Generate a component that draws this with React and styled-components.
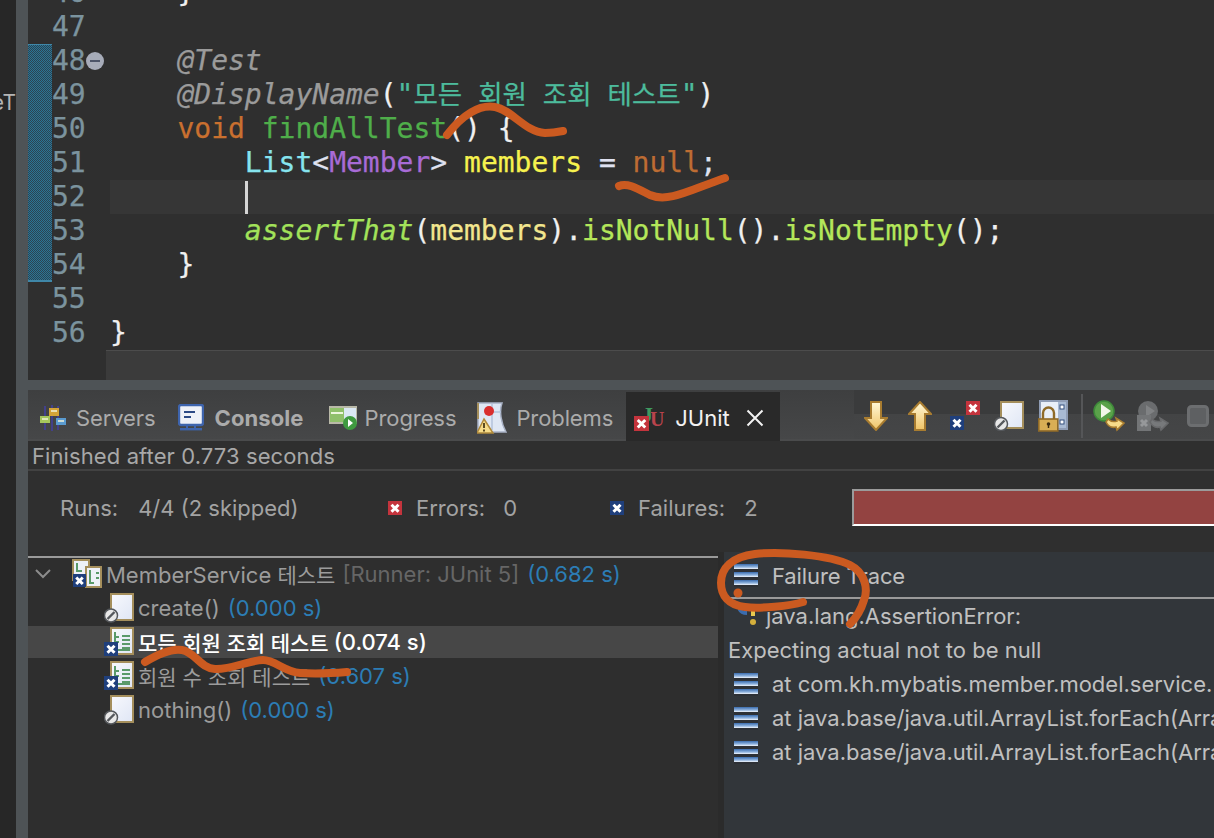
import React from "react";
import styled, { createGlobalStyle } from "styled-components";

const UI_FONT = `"Inter", "Noto Sans CJK KR", sans-serif`;
const MONO_FONT = `"DejaVu Sans Mono", "Noto Sans CJK KR", monospace`;

const GlobalStyle = createGlobalStyle`
  html, body {
    margin: 0;
    padding: 0;
    background: #2f2f2f;
  }
  * {
    box-sizing: border-box;
  }
`;

const tokenColors = {
  annotation: "#9b9b9b",
  keyword: "#c9702f",
  method: "#4fae4a",
  type: "#86e4ee",
  generic: "#a86bd6",
  plain: "#f0f0f0",
  field: "#f6f24e",
  op: "#dfe1f0",
  nullish: "#bd6c33",
  string: "#4dbb9c",
  staticCall: "#a3e25a",
  param: "#f2e68e",
  call: "#b4e65a",
};

// 에디터 코드 라인
const codeLines = [
  { no: 46, tokens: [["plain", "    }"]] },
  { no: 47, tokens: [] },
  { no: 48, changed: true, fold: true, tokens: [["annotation", "    @Test", true]] },
  {
    no: 49,
    changed: true,
    tokens: [
      ["annotation", "    @DisplayName", true],
      ["plain", "("],
      ["string", '"'],
      ["hangul", "모든 회원 조회 테스트"],
      ["string", '"'],
      ["plain", ")"],
    ],
  },
  {
    no: 50,
    changed: true,
    tokens: [
      ["keyword", "    void "],
      ["method", "findAllTest"],
      ["plain", "() {"],
    ],
  },
  {
    no: 51,
    changed: true,
    tokens: [
      ["type", "        List"],
      ["op", "<"],
      ["generic", "Member"],
      ["op", "> "],
      ["field", "members "],
      ["op", "= "],
      ["nullish", "null"],
      ["op", ";"],
    ],
  },
  { no: 52, changed: true, current: true, tokens: [] },
  {
    no: 53,
    changed: true,
    tokens: [
      ["staticCall", "        assertThat", true],
      ["plain", "("],
      ["param", "members"],
      ["plain", ")."],
      ["call", "isNotNull"],
      ["plain", "()."],
      ["call", "isNotEmpty"],
      ["plain", "();"],
    ],
  },
  { no: 54, changed: true, tokens: [["plain", "    }"]] },
  { no: 55, tokens: [] },
  { no: 56, tokens: [["plain", "}"]] },
];

const Page = styled.div`
  width: 1214px;
  height: 838px;
  display: flex;
  overflow: hidden;
  position: relative;
  background: #2f2f2f;
  font-family: ${UI_FONT};
`;

const LeftEdge = styled.div`
  width: 16px;
  flex-shrink: 0;
  background: #272727;
  padding-top: 90px;
  overflow: hidden;
  color: #b5b5b5;
  font-size: 21px;
  line-height: 26px;
  white-space: nowrap;
  display: flex;
  justify-content: flex-end;
`;

const VerticalSash = styled.div`
  width: 12px;
  flex-shrink: 0;
  background: #4e5356;
`;

const Main = styled.div`
  flex: 1;
  min-width: 0;
  display: flex;
  flex-direction: column;
`;

const Editor = styled.div`
  height: 380px;
  flex-shrink: 0;
  display: flex;
  flex-direction: column;
  overflow: hidden;
  background: #2f2f2f;
`;

const CodeLines = styled.div`
  margin-top: -24px;
  font-family: ${MONO_FONT};
  font-size: 28px;
  -webkit-text-stroke: 0.25px;
`;

const CodeRow = styled.div`
  height: 34px;
  display: flex;
  line-height: 34px;
`;

const ChangeCell = styled.div`
  width: 24px;
  flex-shrink: 0;
  ${(p) =>
    p.$changed &&
    `background: repeating-conic-gradient(#2b7596 0 25%, #2b4452 0 50%) 0 0 / 2px 2px;`}
  ${(p) => p.$first && `box-shadow: inset 0 1px #3f87a8;`}
  ${(p) => p.$last && `box-shadow: inset 0 -2px #3f87a8;`}
`;

const LineNo = styled.div`
  width: 34px;
  flex-shrink: 0;
  color: #7b939e;
`;

const FoldCell = styled.div`
  width: 24px;
  flex-shrink: 0;
  display: flex;
  align-items: center;
`;

const FoldMark = styled.span`
  width: 18px;
  height: 18px;
  border-radius: 50%;
  background: #a7acb9;
  display: flex;
  align-items: center;
  justify-content: center;

  &::after {
    content: "";
    width: 10px;
    height: 2px;
    background: #4c5468;
  }
`;

const CodeText = styled.div`
  flex: 1;
  white-space: pre;
  position: relative;
  background: ${(p) => (p.$current ? "#363636" : "transparent")};
`;

const Caret = styled.span`
  position: absolute;
  left: 135px;
  top: 1px;
  bottom: 0;
  width: 3px;
  background: #d5d5d5;
`;

const Tok = styled.span`
  color: ${(p) => tokenColors[p.$kind]};
  font-style: ${(p) => (p.$italic ? "italic" : "normal")};
`;

const HangulText = styled.span`
  color: ${tokenColors.string};
  font-size: 26.5px;
`;

const HScrollTrack = styled.div`
  margin-left: 78px;
  flex: 1;
  background: #3b3b3b;
  border-top: 1px solid #4c4c4c;
`;

const HorizontalSash = styled.div`
  height: 10px;
  flex-shrink: 0;
  background: #4e5356;
`;

const TabBar = styled.div`
  height: 51px;
  flex-shrink: 0;
  display: flex;
  background: linear-gradient(#3e3f40, #464748);
  border-bottom: 2px solid #4a4b4c;
`;

const Tab = styled.div`
  display: flex;
  align-items: center;
  padding-top: 6px;
  gap: ${(p) => p.$gap || 11}px;
  margin-left: ${(p) => p.$offset || 0}px;
  font-size: 22px;
  letter-spacing: -0.1px;
  color: #ababab;
`;

const TabStrong = styled.b`
  font-weight: 700;
  letter-spacing: 0.1px;
`;

const ActiveTab = styled.div`
  width: 154px;
  height: 49px;
  margin: 2px 0 0 13px;
  padding: 3px 16px 0 8px;
  display: flex;
  align-items: center;
  background: #292929;
  color: #f2f2f2;
  font-size: 22px;
`;

const ActiveTabLabel = styled.span`
  margin-left: 9px;
  flex: 1;
`;

const ToolBar = styled.div`
  margin-left: auto;
  width: 360px;
  height: 49px;
  display: flex;
  align-items: center;
  padding: 3px 0 0 10px;
  background: linear-gradient(#3a3b3c, #3a3b3c 50%, #434445 50%, #454647);
`;

const ToolSlot = styled.div`
  width: ${(p) => p.$w}px;
  display: flex;
  flex-shrink: 0;
`;

const ToolSep = styled.div`
  width: 2px;
  height: 44px;
  margin: 0 10px 0 12px;
  background: #555658;
`;

const StatusRow = styled.div`
  height: 30px;
  flex-shrink: 0;
  padding: 0 0 0 4px;
  color: #a8a8a8;
  font-size: 22px;
  letter-spacing: 0.1px;
  line-height: 31px;
  border-bottom: 2px solid #424242;
`;

const CounterRow = styled.div`
  height: 81px;
  flex-shrink: 0;
  display: flex;
  align-items: center;
  padding: 0 0 8px 32px;
  color: #a3a3a3;
  font-size: 22px;
`;

const Counter = styled.div`
  width: ${(p) => p.$w}px;
  display: flex;
  align-items: center;
  flex-shrink: 0;
`;

const CounterLabel = styled.span`
  margin-left: ${(p) => p.$ml || 0}px;
`;

const CounterValue = styled.span`
  margin-left: ${(p) => p.$ml}px;
`;

const ProgressBar = styled.div`
  flex: 1;
  height: 37px;
  background: #934341;
  border-top: 2px solid #9b9b9b;
  border-left: 2px solid #9b9b9b;
  border-bottom: 2px solid #ffffff;
`;

const Panels = styled.div`
  flex: 1;
  min-height: 0;
  display: flex;
`;

const TreePanel = styled.div`
  width: 690px;
  flex-shrink: 0;
  padding-top: 4px;
  background: #2e2e2e;
`;

const TreeTopLine = styled.div`
  height: 2px;
  background: #9a9a9a;
`;

const TreeRow = styled.div`
  height: 32px;
  margin-bottom: 2px;
  display: flex;
  align-items: center;
  white-space: nowrap;
  padding-left: ${(p) => p.$indent}px;
  font-size: 22px;
  color: #9c9c9c;
  ${(p) => p.$selected && `background: #474747; color: #ffffff; font-weight: 500;`}
`;

const TreeLabel = styled.span`
  margin-left: 4px;
`;

const Korean = styled.span`
  font-size: 21px;
`;

const Chevron = styled.span`
  width: 37px;
  flex-shrink: 0;
  display: flex;
`;

const RunnerNote = styled.span`
  color: #666666;
  margin-left: 7px;
`;

const Elapsed = styled.span`
  color: ${(p) => (p.$selected ? "#ffffff" : "#2c7db5")};
  margin-left: ${(p) => (p.$selected ? 5 : 8)}px;
`;

const Divider = styled.div`
  width: 6px;
  flex-shrink: 0;
  background: #2b2b2b;
`;

const TracePanel = styled.div`
  flex: 1;
  min-width: 0;
  background: #32363a;
  overflow: hidden;
  color: #c0c0c0;
  font-size: 22px;
`;

const TraceHeader = styled.div`
  height: 47px;
  padding: 2px 0 0 10px;
  display: flex;
  align-items: center;
  gap: 14px;
  letter-spacing: -0.1px;
  border-bottom: 2px solid #9a9a9a;
`;

const TraceRow = styled.div`
  height: 34px;
  display: flex;
  align-items: center;
  white-space: nowrap;
  padding-left: ${(p) => p.$indent ?? 10}px;
  gap: ${(p) => p.$gap ?? 14}px;
`;

const StackStripes = styled.span`
  width: 24px;
  height: 23px;
  flex-shrink: 0;
  background: repeating-linear-gradient(
    #3a6cae 0,
    #8fb3de 3px,
    #f2f6fc 5px,
    #2d3035 5px,
    #2d3035 8px
  );
`;

const Scribbles = styled.svg`
  position: absolute;
  left: 0;
  top: 0;
  pointer-events: none;
`;

const Cross = ({ x, y, size, color = "#fff" }) => (
  <path
    d={`M${x} ${y}l${size} ${size}M${x + size} ${y}l${-size} ${size}`}
    stroke={color}
    strokeWidth="3"
    fill="none"
  />
);

const ErrorBadge = ({ x = 0, y = 0, size = 14, bg = "#c4343d" }) => (
  <g>
    <rect x={x} y={y} width={size} height={size} fill={bg} />
    <Cross x={x + size * 0.25} y={y + size * 0.27} size={size * 0.5} />
  </g>
);

const SkipBadge = ({ x, y }) => (
  <g>
    <circle cx={x} cy={y} r="6.5" fill="#e8e8e8" stroke="#55585c" strokeWidth="1.5" />
    <path d={`M${x - 3.5} ${y + 3.5}L${x + 3.5} ${y - 3.5}`} stroke="#55585c" strokeWidth="2.4" />
  </g>
);

const TestPage = ({ lines }) => (
  <>
    <defs>
      <linearGradient id="pageFill" x1="0" y1="0" x2="1" y2="1">
        <stop offset="0" stopColor="#f8f9fd" />
        <stop offset="1" stopColor="#dfe6f5" />
      </linearGradient>
    </defs>
    <rect x="7" y="1" width="22" height="26" fill="url(#pageFill)" stroke="#a58f5c" strokeWidth="2" />
    {lines && (
      <path
        d="M11 5v10h4M11 10h4M11 15v8h15M18 9h8M18 13h8M18 17h8M18 21h8"
        stroke="#5a9a6a"
        strokeWidth="2"
        fill="none"
      />
    )}
  </>
);

const SkippedTestIcon = () => (
  <svg width="30" height="30" viewBox="0 0 30 30">
    <TestPage />
    <SkipBadge x={7} y={22.5} />
  </svg>
);

const FailedTestIcon = () => (
  <svg width="30" height="30" viewBox="0 0 30 30">
    <TestPage lines />
    <ErrorBadge x={0} y={15} size={14} bg="#1f3f7c" />
  </svg>
);

const SuiteIcon = () => (
  <svg width="30" height="30" viewBox="0 0 30 30">
    <rect x="1" y="1" width="16" height="20" fill="#eef1f8" stroke="#a58f5c" strokeWidth="2" />
    <path d="M5 4v8h5" stroke="#5a9a6a" strokeWidth="2" fill="none" />
    <rect x="14" y="8" width="15" height="20" fill="#eef1f8" stroke="#a58f5c" strokeWidth="2" />
    <path d="M18 11v13h4M24 14h3M24 19h3" stroke="#5a9a6a" strokeWidth="2" fill="none" />
    <ErrorBadge x={1} y={15} size={13} bg="#1f3f7c" />
  </svg>
);

const ChevronIcon = () => (
  <svg width="16" height="10" viewBox="0 0 16 10">
    <path d="M1 1l7 7 7-7" stroke="#8c8c8c" strokeWidth="2" fill="none" />
  </svg>
);

const ServersIcon = () => (
  <svg width="26" height="26" viewBox="0 0 26 26">
    <path d="M5 1v24M12 0v26M18 1v24" stroke="#42408a" strokeWidth="2" />
    <rect x="9" y="3" width="10" height="8" fill="#d4a437" />
    <rect x="0" y="11" width="10" height="7" fill="#a5c65c" />
    <rect x="16" y="13" width="10" height="7" fill="#5a9bd0" />
    <path d="M2 14h6M11 6h6M18 16h6" stroke="#f2f2d8" strokeWidth="1.4" />
  </svg>
);

const ConsoleIcon = () => (
  <svg width="26" height="27" viewBox="0 0 26 27">
    <rect x="1" y="1" width="24" height="20" rx="2" fill="#eef1f8" stroke="#3e64ad" strokeWidth="2.4" />
    <path d="M6 8h11M6 13h7" stroke="#2c4a86" strokeWidth="2.2" />
    <path d="M9 22v2M17 22v2" stroke="#3e64ad" strokeWidth="2" />
    <rect x="2" y="24" width="22" height="2.4" fill="#3e64ad" />
  </svg>
);

const ProgressIcon = () => (
  <svg width="28" height="24" viewBox="0 0 28 24">
    <rect x="0" y="0" width="28" height="18" fill="#b9b9a8" />
    <rect x="1" y="2" width="14" height="14" fill="#8fc06a" />
    <rect x="15" y="2" width="12" height="14" fill="#dbe8f4" />
    <path d="M2 7h12" stroke="#ecf6dc" strokeWidth="2" />
    <circle cx="21" cy="17" r="7" fill="#3f9a3f" />
    <path d="M19 13v8l5-4z" fill="#fff" />
  </svg>
);

const ProblemsIcon = () => (
  <svg width="30" height="32" viewBox="0 0 30 32">
    <path d="M1 1h24c-3 8 -1 20 4 29H1z" fill="#dfe7f4" stroke="#a9b2c6" strokeWidth="1.5" />
    <path d="M1 1v16" stroke="#a58f5c" strokeWidth="2" />
    <path d="M8 10h16M15 2v26" stroke="#b4c2da" strokeWidth="1.5" />
    <circle cx="12" cy="9" r="5" fill="#d92e2e" />
    <path d="M7 17l9 14H0z" fill="#f6dc8a" stroke="#b08a3c" strokeWidth="1.5" />
    <path d="M7 21v5M7 27.5v2" stroke="#4a3a18" strokeWidth="1.8" />
  </svg>
);

const JUnitIcon = () => (
  <svg width="32" height="30" viewBox="0 0 32 30">
    <text x="8" y="19" fontFamily="Liberation Serif, serif" fontSize="22" fontWeight="700" fill="#3f9a5f">
      J
    </text>
    <text x="16" y="23" fontFamily="Liberation Serif, serif" fontSize="20" fontWeight="700" fill="#b8434c">
      U
    </text>
    <ErrorBadge x={0} y={13} size={15} />
  </svg>
);

const CloseIcon = () => (
  <svg width="18" height="18" viewBox="0 0 18 18">
    <path d="M1.5 1.5l15 15M16.5 1.5l-15 15" stroke="#f2f2f2" strokeWidth="2" />
  </svg>
);

const ArrowFill = () => (
  <defs>
    <linearGradient id="arrowFill" x1="0" y1="0" x2="0" y2="1">
      <stop offset="0" stopColor="#fff8d8" />
      <stop offset="1" stopColor="#f0c466" />
    </linearGradient>
  </defs>
);

const DownArrowIcon = () => (
  <svg width="24" height="30" viewBox="0 0 24 30">
    <ArrowFill />
    <path d="M7 1h10v16h6L12 29 1 17h6z" fill="url(#arrowFill)" stroke="#a87c30" strokeWidth="2" />
  </svg>
);

const UpArrowIcon = () => (
  <svg width="24" height="30" viewBox="0 0 24 30">
    <ArrowFill />
    <path d="M7 29h10V13h6L12 1 1 13h6z" fill="url(#arrowFill)" stroke="#a87c30" strokeWidth="2" />
  </svg>
);

const ErrorPairIcon = () => (
  <svg width="30" height="31" viewBox="0 0 30 31">
    <ErrorBadge x={16} y={0} size={14} />
    <ErrorBadge x={0} y={15} size={14} bg="#1f3f7c" />
  </svg>
);

const SkipPageIcon = () => (
  <svg width="30" height="30" viewBox="0 0 30 30">
    <TestPage />
    <SkipBadge x={7} y={23} />
  </svg>
);

const LockLayoutIcon = () => (
  <svg width="30" height="32" viewBox="0 0 30 32">
    <rect x="2" y="1" width="27" height="28" fill="#e9eff8" stroke="#8f9cb4" strokeWidth="2" />
    <rect x="20" y="2" width="8" height="26" fill="#a9bad3" />
    <rect x="22" y="5" width="4" height="4" fill="#fff" stroke="#36507e" />
    <rect x="22" y="20" width="4" height="4" fill="#fff" stroke="#36507e" />
    <path d="M5 19v-6a5.5 5.5 0 0 1 11 0v6" fill="none" stroke="#8f6a28" strokeWidth="2.4" />
    <rect x="0.8" y="19" width="19" height="12" fill="#d9ae55" stroke="#8f6a28" strokeWidth="1.6" />
    <circle cx="10.5" cy="24" r="1.8" fill="#3d2c10" />
    <path d="M10.5 24v4" stroke="#3d2c10" strokeWidth="1.5" />
  </svg>
);

const RerunIcon = () => (
  <svg width="32" height="32" viewBox="0 0 32 32">
    <circle cx="11" cy="11" r="10" fill="#5aa24a" stroke="#3e8a3a" strokeWidth="1.5" />
    <path d="M8 4v14l10-7z" fill="#f2f7ea" />
    <path
      d="M15 19c3 3 6 3 9 2l-1-3 8 5-7 7-1-3c-4 1-8-1-10-5z"
      fill="#f8dc8a"
      stroke="#a87c30"
      strokeWidth="1.6"
    />
  </svg>
);

const RerunFailedIcon = () => (
  <svg width="32" height="32" viewBox="0 0 32 32">
    <circle cx="11" cy="11" r="10" fill="#6a6c6e" />
    <path d="M9 5v12l9-6z" fill="#808284" />
    <rect x="0" y="15" width="14" height="16" fill="#737577" />
    <Cross x={4} y={20} size={6} color="#96989a" />
    <path
      d="M15 19c3 3 6 3 9 2l-1-3 8 5-7 7-1-3c-4 1-8-1-10-5z"
      fill="#77797b"
      stroke="#68696b"
      strokeWidth="1.6"
    />
  </svg>
);

const StopIcon = () => (
  <svg width="22" height="22" viewBox="0 0 22 22">
    <rect x="1.5" y="1.5" width="19" height="19" rx="3" fill="#5e6062" stroke="#6c6e70" strokeWidth="3" />
  </svg>
);

const CounterBadge = ({ bg }) => (
  <svg width="14" height="14" viewBox="0 0 14 14">
    <ErrorBadge x={0} y={0} size={14} bg={bg} />
  </svg>
);

const WarningStackIcon = () => (
  <svg width="26" height="26" viewBox="0 0 26 26">
    <path d="M1 2c0 6 2 8 8 8" stroke="#3a6cae" strokeWidth="4" fill="none" />
    <path d="M15 4v9" stroke="#e8c94f" strokeWidth="4" />
    <circle cx="15" cy="19" r="3" fill="#d5b03c" />
  </svg>
);

const renderToken = ([kind, text, italic], idx) =>
  kind === "hangul" ? (
    <HangulText key={idx}>{text}</HangulText>
  ) : (
    <Tok key={idx} $kind={kind} $italic={italic}>
      {text}
    </Tok>
  );

const App = () => {
  return (
    <Page>
      <GlobalStyle />
      <LeftEdge>eT</LeftEdge>
      <VerticalSash />
      <Main>
        <Editor>
          <CodeLines>
            {codeLines.map((line) => (
              <CodeRow key={line.no}>
                <ChangeCell
                  $changed={line.changed}
                  $first={line.no === 48}
                  $last={line.no === 54}
                />
                <LineNo>{line.no}</LineNo>
                <FoldCell>{line.fold && <FoldMark />}</FoldCell>
                <CodeText $current={line.current}>
                  {line.tokens.map(renderToken)}
                  {line.current && <Caret />}
                </CodeText>
              </CodeRow>
            ))}
          </CodeLines>
          <HScrollTrack />
        </Editor>
        <HorizontalSash />

        <TabBar>
          <Tab $offset={12} $gap={10}>
            <ServersIcon />
            Servers
          </Tab>
          <Tab $offset={22}>
            <ConsoleIcon />
            <TabStrong>Console</TabStrong>
          </Tab>
          <Tab $offset={25} $gap={8}>
            <ProgressIcon />
            Progress
          </Tab>
          <Tab $offset={21} $gap={9}>
            <ProblemsIcon />
            Problems
          </Tab>
          <ActiveTab>
            <JUnitIcon />
            <ActiveTabLabel>JUnit</ActiveTabLabel>
            <CloseIcon />
          </ActiveTab>
          <ToolBar>
            <ToolSlot $w={44}>
              <DownArrowIcon />
            </ToolSlot>
            <ToolSlot $w={42}>
              <UpArrowIcon />
            </ToolSlot>
            <ToolSlot $w={44}>
              <ErrorPairIcon />
            </ToolSlot>
            <ToolSlot $w={44}>
              <SkipPageIcon />
            </ToolSlot>
            <ToolSlot $w={31}>
              <LockLayoutIcon />
            </ToolSlot>
            <ToolSep />
            <ToolSlot $w={44}>
              <RerunIcon />
            </ToolSlot>
            <ToolSlot $w={50}>
              <RerunFailedIcon />
            </ToolSlot>
            <ToolSlot $w={22}>
              <StopIcon />
            </ToolSlot>
          </ToolBar>
        </TabBar>

        <StatusRow>Finished after 0.773 seconds</StatusRow>

        <CounterRow>
          <Counter $w={328}>
            <CounterLabel>Runs:</CounterLabel>
            <CounterValue $ml={20}>4/4 (2 skipped)</CounterValue>
          </Counter>
          <Counter $w={222}>
            <CounterBadge bg="#c4343d" />
            <CounterLabel $ml={14}>Errors:</CounterLabel>
            <CounterValue $ml={18}>0</CounterValue>
          </Counter>
          <Counter $w={242}>
            <CounterBadge bg="#1f3f7c" />
            <CounterLabel $ml={14}>Failures:</CounterLabel>
            <CounterValue $ml={19}>2</CounterValue>
          </Counter>
          <ProgressBar />
        </CounterRow>

        <Panels>
          <TreePanel>
            <TreeTopLine />
            <TreeRow $indent={7}>
              <Chevron>
                <ChevronIcon />
              </Chevron>
              <SuiteIcon />
              <TreeLabel>
                MemberService <Korean>테스트</Korean>
              </TreeLabel>
              <RunnerNote>[Runner: JUnit 5]</RunnerNote>
              <Elapsed>(0.682 s)</Elapsed>
            </TreeRow>
            <TreeRow $indent={76}>
              <SkippedTestIcon />
              <TreeLabel>create()</TreeLabel>
              <Elapsed>(0.000 s)</Elapsed>
            </TreeRow>
            <TreeRow $indent={76} $selected>
              <FailedTestIcon />
              <TreeLabel>
                <Korean>모든 회원 조회 테스트</Korean>
              </TreeLabel>
              <Elapsed $selected>(0.074 s)</Elapsed>
            </TreeRow>
            <TreeRow $indent={76}>
              <FailedTestIcon />
              <TreeLabel>
                <Korean>회원 수 조회 테스트</Korean>
              </TreeLabel>
              <Elapsed>(0.607 s)</Elapsed>
            </TreeRow>
            <TreeRow $indent={76}>
              <SkippedTestIcon />
              <TreeLabel>nothing()</TreeLabel>
              <Elapsed>(0.000 s)</Elapsed>
            </TreeRow>
          </TreePanel>
          <Divider />
          <TracePanel>
            <TraceHeader>
              <StackStripes />
              Failure Trace
            </TraceHeader>
            <TraceRow $indent={14} $gap={2}>
              <WarningStackIcon />
              java.lang.AssertionError:
            </TraceRow>
            <TraceRow $indent={4}>Expecting actual not to be null</TraceRow>
            <TraceRow>
              <StackStripes />
              at com.kh.mybatis.member.model.service.
            </TraceRow>
            <TraceRow>
              <StackStripes />
              at java.base/java.util.ArrayList.forEach(Arra
            </TraceRow>
            <TraceRow>
              <StackStripes />
              at java.base/java.util.ArrayList.forEach(Arra
            </TraceRow>
          </TracePanel>
        </Panels>
      </Main>

      <Scribbles width="1214" height="838" viewBox="0 0 1214 838" fill="none">
        <g stroke="#cb5a20" strokeWidth="8" strokeLinecap="round" strokeLinejoin="round">
          <path d="M447 135C462 115 480 104 495 107C512 110 525 132 545 133C552 133 558 132 563 131" />
          <path d="M619 186C628 182 640 190 650 195C668 203 690 190 725 178" />
          <path d="M803 602C790 606 760 609 745 607C728 605 721 595 721 583C721 568 732 557 755 554C780 551 830 555 850 565C866 573 868 590 864 600C861 610 856 618 850 624" />
          <path d="M145 662C155 656 170 648 182 650C195 652 200 668 215 669C230 670 250 660 263 660C275 660 285 672 300 673C315 674 335 673 347 672" />
        </g>
        <circle cx="738" cy="593" r="4.5" fill="#cb5a20" />
      </Scribbles>
    </Page>
  );
};

export default App;
